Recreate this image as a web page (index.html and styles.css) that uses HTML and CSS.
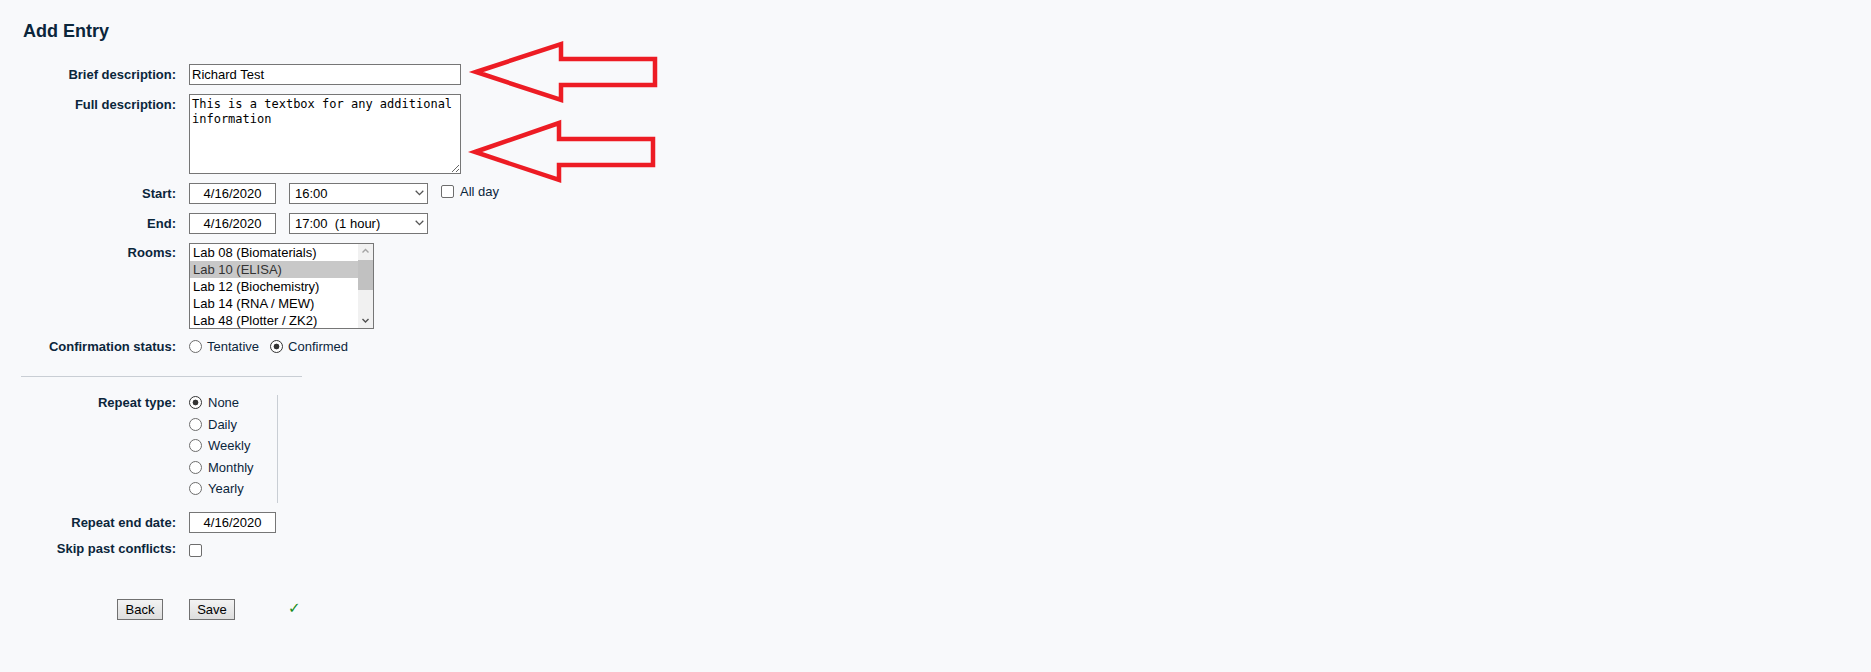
FILE: index.html
```html
<!DOCTYPE html>
<html>
<head>
  <title>Add Entry</title>
  <link rel="stylesheet" href="styles.css">
</head>
<body>
  <div class="page">
    <h2 class="title">Add Entry</h2>

    <form class="entry-form">
      <!-- Description -->
      <div class="row">
        <label class="lbl">Brief description:</label>
        <input type="text" class="text-in" value="Richard Test">
      </div>
      <div class="row">
        <label class="lbl">Full description:</label>
        <textarea class="desc" spellcheck="false">This is a textbox for any additional information</textarea>
      </div>

      <!-- Times -->
      <div class="row">
        <label class="lbl">Start:</label>
        <div class="ctl">
          <input type="text" class="date-in" value="4/16/2020">
          <span class="sel-wrap">
            <select class="sel"><option>16:00</option></select>
            <svg class="chev" width="9" height="6" viewBox="0 0 9 6"><path d="M0.7 0.8 L4.5 4.6 L8.3 0.8" fill="none" stroke="#555" stroke-width="1.3"/></svg>
          </span>
          <label class="inline-opt"><input type="checkbox" class="chk"> All day</label>
        </div>
      </div>
      <div class="row">
        <label class="lbl">End:</label>
        <div class="ctl">
          <input type="text" class="date-in" value="4/16/2020">
          <span class="sel-wrap">
            <select class="sel"><option>17:00&nbsp;&nbsp;(1 hour)</option></select>
            <svg class="chev" width="9" height="6" viewBox="0 0 9 6"><path d="M0.7 0.8 L4.5 4.6 L8.3 0.8" fill="none" stroke="#555" stroke-width="1.3"/></svg>
          </span>
        </div>
      </div>

      <!-- Rooms -->
      <div class="row rooms-row">
        <label class="lbl lbl-rooms">Rooms:</label>
        <div class="listbox">
          <div class="options">
            <div class="opt">Lab 08 (Biomaterials)</div>
            <div class="opt selected">Lab 10 (ELISA)</div>
            <div class="opt">Lab 12 (Biochemistry)</div>
            <div class="opt">Lab 14 (RNA / MEW)</div>
            <div class="opt">Lab 48 (Plotter / ZK2)</div>
          </div>
          <div class="scrollbar">
            <svg class="arrow" width="15" height="14" viewBox="0 0 15 14"><path d="M4.5 8.5 L7.5 5.5 L10.5 8.5" fill="none" stroke="#a3a3a3" stroke-width="1.4"/></svg>
            <div class="thumb"></div>
            <div class="track-fill"></div>
            <svg class="arrow" width="15" height="14" viewBox="0 0 15 14"><path d="M4.5 5 L7.5 8 L10.5 5" fill="none" stroke="#505050" stroke-width="1.4"/></svg>
          </div>
        </div>
      </div>

      <div class="row short-row">
        <label class="lbl">Confirmation status:</label>
        <div class="ctl">
          <label class="inline-opt"><input type="radio" name="status" class="rad"> Tentative</label>
          <label class="inline-opt"><input type="radio" name="status" class="rad" checked> Confirmed</label>
        </div>
      </div>

      <hr class="divider">

      <!-- Repeat -->
      <div class="row">
        <label class="lbl lbl-short">Repeat type:</label>
        <div class="repeat-list">
          <label class="rep-opt"><input type="radio" name="rep" class="rad" checked> None</label>
          <label class="rep-opt"><input type="radio" name="rep" class="rad"> Daily</label>
          <label class="rep-opt"><input type="radio" name="rep" class="rad"> Weekly</label>
          <label class="rep-opt"><input type="radio" name="rep" class="rad"> Monthly</label>
          <label class="rep-opt"><input type="radio" name="rep" class="rad"> Yearly</label>
        </div>
      </div>
      <div class="row">
        <label class="lbl">Repeat end date:</label>
        <input type="text" class="date-in" value="4/16/2020">
      </div>
      <div class="row skip-row">
        <label class="lbl lbl-short">Skip past conflicts:</label>
        <input type="checkbox" class="chk">
      </div>

      <!-- Buttons -->
      <div class="row buttons">
        <div class="btn-cell"><button type="button" class="btn">Back</button></div>
        <button type="button" class="btn">Save</button>
        <span class="ok">&#10003;</span>
      </div>
    </form>

    <!-- annotation arrows -->
    <svg class="marks" width="700" height="200" viewBox="0 0 700 200">
      <polygon points="476,72 561,44 561,59 655,59 655,85 561,85 561,100" fill="none" stroke="#ed1c24" stroke-width="4.5"/>
      <polygon points="475,152 559,123 559,139 653,139 653,165 559,165 559,180" fill="none" stroke="#ed1c24" stroke-width="4.5"/>
    </svg>
  </div>
</body>
</html>
```

FILE: styles.css
```css
/* Base */
:root {
  --text: #0b263b;
  --bg: #f8f9fb;
  --field-border: #767676;
  --rule: #c9ced4;
}

* {
  box-sizing: border-box;
}

body, html {
  margin: 0;
  padding: 0;
  background: var(--bg);
  color: var(--text);
  font-family: 'Liberation Sans', Arial, sans-serif;
  font-size: 13px;
}

.page {
  position: relative;
  padding: 20px 0 40px 21px;
  min-height: 672px;
}

.title {
  margin: 0 0 22px 2px;
  font-size: 18px;
  line-height: 22px;
  font-weight: bold;
}

/* Form rows */
.row {
  display: flex;
  align-items: flex-start;
  gap: 13px;
  margin-bottom: 9px;
}

.lbl {
  flex: none;
  width: 155px;
  text-align: right;
  font-weight: bold;
  line-height: 21px;
  white-space: nowrap;
}

.lbl-rooms {
  line-height: 17px;
  padding-top: 1px;
}

.lbl-short {
  line-height: 15px;
}

.ctl {
  display: flex;
  align-items: flex-start;
  gap: 13px;
}

/* Fields */
.text-in, .date-in, .desc, .sel {
  font-family: 'Liberation Sans', Arial, sans-serif;
  font-size: 13px;
  color: #000;
  background: #fff;
  border: 1px solid var(--field-border);
  border-radius: 0;
  margin: 0;
  outline: none;
}

.text-in {
  width: 272px;
  height: 21px;
  padding: 1px 2px;
}

.desc {
  display: block;
  width: 272px;
  height: 80px;
  padding: 2px 2px;
  font-family: 'DejaVu Sans Mono', 'Liberation Mono', monospace;
  font-size: 12px;
  line-height: 15px;
  resize: both;
}

.date-in {
  width: 87px;
  height: 21px;
  padding: 1px 2px;
  text-align: center;
}

.sel-wrap {
  position: relative;
  display: block;
}

.sel {
  appearance: none;
  -webkit-appearance: none;
  display: block;
  width: 139px;
  height: 21px;
  padding: 0 0 0 5px;
  line-height: 19px;
}

.chev {
  position: absolute;
  right: 4px;
  top: 7px;
  pointer-events: none;
}

/* Checkbox & radio */
.chk, .rad {
  appearance: none;
  -webkit-appearance: none;
  flex: none;
  width: 13px;
  height: 13px;
  margin: 0;
  background: #fff;
  border: 1px solid #6d6d6d;
}

.chk {
  border-radius: 2px;
}

.rad {
  border-radius: 50%;
}

.rad:checked {
  border-color: #333;
  background: radial-gradient(circle, #333 0 2.6px, #fff 3.2px);
}

.inline-opt {
  display: flex;
  align-items: center;
  gap: 6px;
  line-height: 15px;
}

.ctl .inline-opt .chk {
  margin-top: 2px;
}

.ctl .inline-opt {
  align-items: flex-start;
  line-height: 17px;
}

.ctl .inline-opt .rad {
  margin-top: 1px;
}

/* Rooms listbox */
.rooms-row {
  margin-bottom: 10px;
}

.listbox {
  display: flex;
  width: 185px;
  height: 86px;
  border: 1px solid var(--field-border);
  background: #fff;
  overflow: hidden;
}

.options {
  flex: 1;
}

.opt {
  height: 17px;
  line-height: 17px;
  padding-left: 3px;
  color: #000;
  white-space: nowrap;
}

.opt.selected {
  background: #c8c8c8;
  color: #333;
}

.scrollbar {
  flex: none;
  width: 15px;
  display: flex;
  flex-direction: column;
  background: #f1f1f1;
}

.arrow {
  display: block;
  flex: none;
}

.thumb {
  flex: none;
  height: 30px;
  margin-top: 2px;
  background: #c1c1c1;
}

.track-fill {
  flex: 1;
}

.short-row .ctl {
  gap: 11px;
}

.short-row .lbl {
  line-height: 15px;
}

.short-row .inline-opt {
  gap: 5px;
  line-height: 15px;
}

.short-row .inline-opt .rad {
  margin-top: 1px;
}

.divider {
  width: 281px;
  margin: 22px 0 18px 0;
  border: 0;
  border-top: 1px solid var(--rule);
}

/* Repeat options */
.repeat-list {
  width: 89px;
  border-right: 1px solid var(--rule);
}

.rep-opt {
  display: flex;
  align-items: center;
  gap: 6px;
  height: 15px;
  line-height: 15px;
  margin-bottom: 6.5px;
}

.skip-row {
  margin-top: -1px;
}

.skip-row .chk {
  margin-top: 3px;
}

/* Buttons */
.buttons {
  margin-top: 42px;
  align-items: center;
}

.btn-cell {
  width: 155px;
  display: flex;
  justify-content: flex-end;
  padding-right: 13px;
}

.btn {
  width: 46px;
  height: 21px;
  padding: 0;
  font-family: 'Liberation Sans', Arial, sans-serif;
  font-size: 13px;
  color: #000;
  background: linear-gradient(#f3f3f3, #dddddd);
  border: 1px solid #707070;
  border-radius: 0;
}

.ok {
  margin-left: 40px;
  color: #168c1a;
  font-family: 'DejaVu Sans', sans-serif;
  font-size: 15px;
  font-weight: bold;
  line-height: 14px;
  margin-top: -3px;
}

/* Annotations */
.marks {
  position: absolute;
  top: 0;
  left: 0;
  pointer-events: none;
}
```
